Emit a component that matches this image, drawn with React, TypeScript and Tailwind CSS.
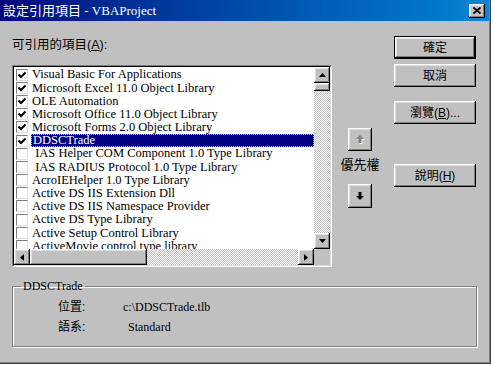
import React from 'react';

const raised =
  'bg-[#c0c0c0] shadow-[inset_-1px_-1px_#000,inset_1px_1px_#fff,inset_-2px_-2px_#808080,inset_2px_2px_#dfdfdf]';
const uiFont = "font-['Liberation_Sans','Noto_Sans_CJK_TC',sans-serif]";
const serifFont = "font-['Liberation_Serif','Noto_Sans_CJK_TC',serif]";

const items: { name: string; checked: boolean }[] = [
  { name: 'Visual Basic For Applications', checked: true },
  { name: 'Microsoft Excel 11.0 Object Library', checked: true },
  { name: 'OLE Automation', checked: true },
  { name: 'Microsoft Office 11.0 Object Library', checked: true },
  { name: 'Microsoft Forms 2.0 Object Library', checked: true },
  { name: 'DDSCTrade', checked: true },
  { name: ' IAS Helper COM Component 1.0 Type Library', checked: false },
  { name: ' IAS RADIUS Protocol 1.0 Type Library', checked: false },
  { name: 'AcroIEHelper 1.0 Type Library', checked: false },
  { name: 'Active DS IIS Extension Dll', checked: false },
  { name: 'Active DS IIS Namespace Provider', checked: false },
  { name: 'Active DS Type Library', checked: false },
  { name: 'Active Setup Control Library', checked: false },
  { name: 'ActiveMovie control type library', checked: false },
];

function Checkbox({ checked }: { checked: boolean }) {
  return (
    <div className="flex h-[12px] w-[12px] shrink-0 items-center justify-center border border-t-[#808080] border-l-[#808080] border-r-[#dfdfdf] border-b-[#dfdfdf] bg-white">
      {checked && (
        <svg width="8" height="8" viewBox="0 0 8 8">
          <polyline points="0.5,3.5 3,6 7.5,1.5" fill="none" stroke="#000" strokeWidth="2" />
        </svg>
      )}
    </div>
  );
}

function Tri({ dir }: { dir: 'up' | 'down' | 'left' | 'right' }) {
  const pts = {
    up: '3.5,0 7,4 0,4',
    down: '0,0 7,0 3.5,4',
    left: '4,0 4,7 0,3.5',
    right: '0,0 0,7 4,3.5',
  }[dir];
  const w = dir === 'up' || dir === 'down' ? 7 : 4;
  const h = dir === 'up' || dir === 'down' ? 4 : 7;
  return (
    <svg width={w} height={h} viewBox={`0 0 ${w} ${h}`}>
      <polygon points={pts} fill="#000" />
    </svg>
  );
}

function ScrollBtn({ dir }: { dir: 'up' | 'down' | 'left' | 'right' }) {
  return (
    <div className={`flex h-[16px] w-[16px] shrink-0 items-center justify-center ${raised}`}>
      <Tri dir={dir} />
    </div>
  );
}

const dither = 'bg-[repeating-conic-gradient(#c0c0c0_0%_25%,#ffffff_0%_50%)] bg-[length:2px_2px]';

function Arrow({ up, disabled }: { up?: boolean; disabled?: boolean }) {
  const d = up ? 'M4 0 L8 4 L5.5 4 L5.5 8 L2.5 8 L2.5 4 L0 4 Z' : 'M4 8 L8 4 L5.5 4 L5.5 0 L2.5 0 L2.5 4 L0 4 Z';
  return (
    <svg width="9" height="9" viewBox="0 0 9 9">
      {disabled && <path d={d} fill="#fff" transform="translate(1 1)" />}
      <path d={d} fill={disabled ? '#808080' : '#000'} />
    </svg>
  );
}

function Button({ children, isDefault, className = '' }: { children: React.ReactNode; isDefault?: boolean; className?: string }) {
  return (
    <div className={`${isDefault ? 'border border-black' : ''} h-[23px] w-[82px] ${className}`}>
      <div className={`flex h-full w-full items-center justify-center text-[12px] text-black ${raised}`}>{children}</div>
    </div>
  );
}

export default function App() {
  return (
    <div className={`h-[365px] w-[494px] overflow-hidden bg-white ${uiFont}`}>
      <div className="h-[364px] w-[491px] bg-[#c0c0c0] shadow-[inset_-1px_-1px_#404040,inset_-2px_-2px_#808080]">
        {/* title bar */}
        <div className="flex h-[21px] w-[489px] items-center justify-between bg-gradient-to-r from-[#000080] to-[#1084d0] pl-[3px] pr-[4px]">
          <span className={`text-[13px] leading-none text-white ${serifFont}`}>設定引用項目 - VBAProject</span>
          <div className={`flex h-[14px] w-[16px] items-center justify-center ${raised}`}>
            <svg width="8" height="7" viewBox="0 0 8 7">
              <path d="M0.5 0.5 L7.5 6.5 M7.5 0.5 L0.5 6.5" stroke="#000" strokeWidth="1.7" />
            </svg>
          </div>
        </div>

        <div className="flex pl-[12px]">
          {/* left column */}
          <div className="w-[320px] pt-[16px]">
            <div className="h-[16px] text-[12.5px] leading-[16px] text-black">
              可引用的項目(<span className="underline">A</span>):
            </div>
            <div className="mt-[12px] border border-t-[#808080] border-l-[#808080] border-r-white border-b-white">
              <div className="border border-t-[#000] border-l-[#000] border-r-[#dfdfdf] border-b-[#dfdfdf]">
                <div className="grid grid-cols-[300px_16px] grid-rows-[182px_16px]">
                  <div className={`overflow-hidden bg-white pt-[1px] text-[12.5px] text-black ${serifFont}`}>
                    {items.map((it) => {
                      const sel = it.name === 'DDSCTrade';
                      return (
                        <div key={it.name} className="flex h-[13.2px] items-center pl-[2px]">
                          <Checkbox checked={it.checked} />
                          <div
                            className={`ml-[3px] flex h-[13px] flex-1 items-center whitespace-pre pl-[1px] leading-none ${
                              sel ? 'border border-dotted border-[#c8c880] bg-[#000080] text-white' : ''
                            }`}
                          >
                            {it.name}
                          </div>
                        </div>
                      );
                    })}
                  </div>
                  <div className="flex flex-col">
                    <ScrollBtn dir="up" />
                    <div className={`h-[8px] w-[16px] ${raised}`} />
                    <div className={`flex-1 ${dither}`} />
                    <ScrollBtn dir="down" />
                  </div>
                  <div className="flex">
                    <ScrollBtn dir="left" />
                    <div className={`h-[16px] w-[117px] ${raised}`} />
                    <div className={`flex-1 ${dither}`} />
                    <ScrollBtn dir="right" />
                  </div>
                  <div className="bg-[#c0c0c0]" />
                </div>
              </div>
            </div>
          </div>

          {/* priority column */}
          <div className="ml-[6px] flex w-[44px] flex-col items-center pt-[107px]">
            <div className={`flex h-[23px] w-[24px] items-center justify-center ${raised}`}>
              <Arrow up disabled />
            </div>
            <div className="mt-[7px] h-[14px] text-[13px] leading-[14px] text-black">優先權</div>
            <div className={`mt-[12px] flex h-[24px] w-[24px] items-center justify-center ${raised}`}>
              <Arrow />
            </div>
          </div>

          {/* buttons */}
          <div className="ml-[12px] flex flex-col pt-[15px]">
            <Button isDefault>確定</Button>
            <Button className="mt-[5px]">取消</Button>
            <Button className="mt-[14px]">
              瀏覽(<span className="underline">B</span>)...
            </Button>
            <Button className="mt-[40px]">
              說明(<span className="underline">H</span>)
            </Button>
          </div>
        </div>

        <fieldset className="ml-[12px] mt-[12px] w-[465px] border border-[#808080] shadow-[1px_1px_0_#fff,inset_1px_1px_0_#fff]">
          <legend className={`ml-[8px] px-[2px] text-[12px] leading-[14px] text-black ${serifFont}`}>DDSCTrade</legend>
          <div className="pb-[12px] pl-[45px] pt-[7px]">
            <div className="flex h-[14px] items-center text-[12px] text-black">
              <span className="w-[65px]">位置:</span>
              <span className={serifFont}>c:\DDSCTrade.tlb</span>
            </div>
            <div className="mt-[6px] flex h-[14px] items-center text-[12px] text-black">
              <span className="w-[65px]">語系:</span>
              <span className={`pl-[5px] ${serifFont}`}>Standard</span>
            </div>
          </div>
        </fieldset>
      </div>
    </div>
  );
}
